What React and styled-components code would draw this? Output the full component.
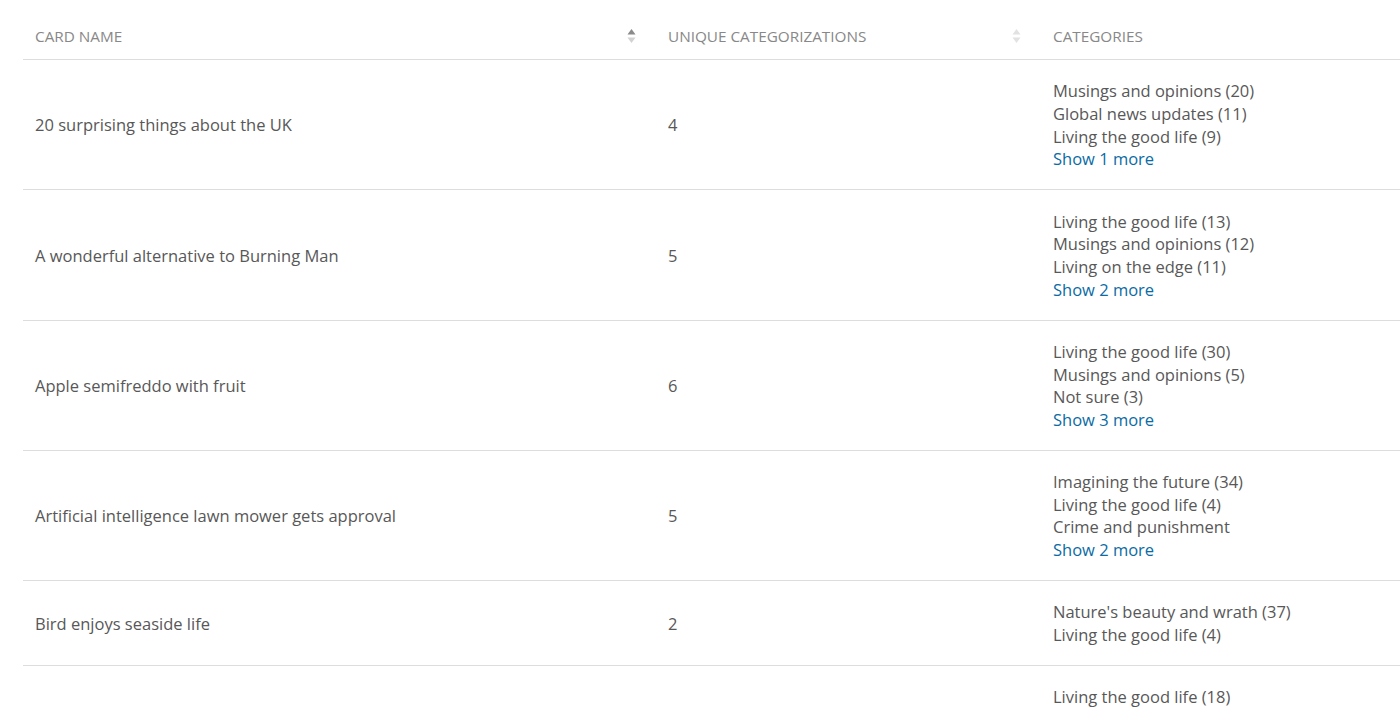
import React from "react";
import styled, { createGlobalStyle } from "styled-components";

const GlobalStyle = createGlobalStyle`
  html, body {
    margin: 0;
    padding: 0;
    background: #fff;
    overflow: hidden;
  }
  body {
    font-family: "Open Sans", "Noto Sans", sans-serif;
    color: #555;
  }
`;

const rows = [
  {
    name: "20 surprising things about the UK",
    unique: 4,
    categories: ["Musings and opinions (20)", "Global news updates (11)", "Living the good life (9)"],
    more: 1,
  },
  {
    name: "A wonderful alternative to Burning Man",
    unique: 5,
    categories: ["Living the good life (13)", "Musings and opinions (12)", "Living on the edge (11)"],
    more: 2,
  },
  {
    name: "Apple semifreddo with fruit",
    unique: 6,
    categories: ["Living the good life (30)", "Musings and opinions (5)", "Not sure (3)"],
    more: 3,
  },
  {
    name: "Artificial intelligence lawn mower gets approval",
    unique: 5,
    categories: ["Imagining the future (34)", "Living the good life (4)", "Crime and punishment"],
    more: 2,
  },
  {
    name: "Bird enjoys seaside life",
    unique: 2,
    categories: ["Nature's beauty and wrath (37)", "Living the good life (4)"],
    more: 0,
  },
  {
    name: "",
    unique: null,
    categories: ["Living the good life (18)"],
    more: 0,
  },
];

const Wrapper = styled.div`
  padding-left: 23px;
  width: 1420px;
`;

const Table = styled.table`
  width: 100%;
  border-collapse: collapse;
  table-layout: fixed;
`;

const HeadCell = styled.th`
  box-sizing: border-box;
  width: ${(p) => (p.$w ? `${p.$w}px` : "auto")};
  padding: 26px 20px 13px 12px;
  text-align: left;
  font-weight: 400;
  font-size: 15.3px;
  line-height: 20px;
  color: #888;
  text-transform: uppercase;
  border-bottom: 1px solid #ddd;
  vertical-align: middle;
`;

const HeadInner = styled.div`
  display: flex;
  align-items: center;
  justify-content: space-between;
`;

const SortIcon = styled.svg`
  width: 9px;
  height: 14px;
  flex-shrink: 0;
`;

const Row = styled.tr`
  border-bottom: 1px solid #ddd;
`;

const Cell = styled.td`
  padding: 20.3px 12px 18.3px;
  font-size: 16.5px;
  line-height: 22.67px;
  color: #585858;
  vertical-align: middle;
  white-space: nowrap;
`;

const CategoryList = styled.div`
  display: flex;
  flex-direction: column;
`;

const ShowMore = styled.a`
  color: #0b6ba5;
  text-decoration: none;
  cursor: pointer;
`;

function Sort({ active }) {
  return (
    <SortIcon viewBox="0 0 9 14">
      <polygon points="4.5,0 8.5,5.5 0.5,5.5" fill={active ? "#8a8a8a" : "#e2e2e2"} />
      <polygon points="0.5,8.5 8.5,8.5 4.5,14" fill={active ? "#d2d2d2" : "#e2e2e2"} />
    </SortIcon>
  );
}

function App() {
  return (
    <Wrapper>
      <GlobalStyle />
      <Table>
        <thead>
          <tr>
            <HeadCell $w={633}>
              <HeadInner>
                <span>Card name</span>
                <Sort active />
              </HeadInner>
            </HeadCell>
            <HeadCell $w={385}>
              <HeadInner>
                <span>Unique categorizations</span>
                <Sort />
              </HeadInner>
            </HeadCell>
            <HeadCell>
              <HeadInner>
                <span>Categories</span>
              </HeadInner>
            </HeadCell>
          </tr>
        </thead>
        <tbody>
          {rows.map((r, i) => (
            <Row key={i}>
              <Cell>{r.name}</Cell>
              <Cell>{r.unique}</Cell>
              <Cell>
                <CategoryList>
                  {r.categories.map((c) => (
                    <span key={c}>{c}</span>
                  ))}
                  {r.more > 0 && <ShowMore>Show {r.more} more</ShowMore>}
                </CategoryList>
              </Cell>
            </Row>
          ))}
        </tbody>
      </Table>
    </Wrapper>
  );
}

export default App;
